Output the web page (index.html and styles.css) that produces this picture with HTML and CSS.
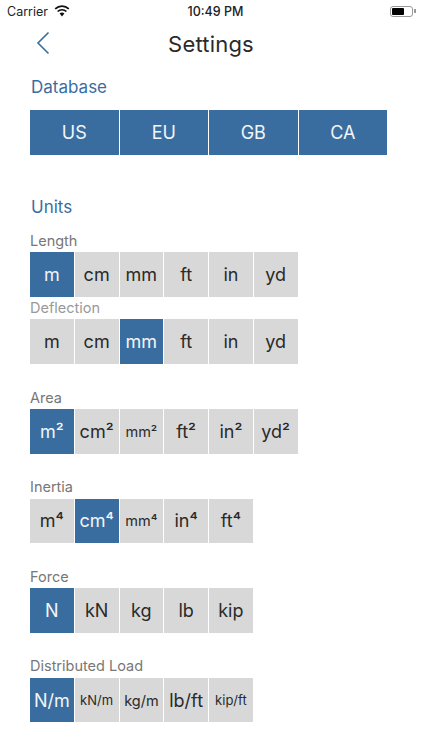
FILE: index.html
```html
<!DOCTYPE html>
<html lang="en">
<head>
  <meta charset="UTF-8" />
  <meta name="viewport" content="width=device-width, initial-scale=1.0" />
  <title>Settings</title>
  <link rel="stylesheet" href="styles.css">
</head>
<body>
  <div class="status">
    <div class="status-left">
      <span>Carrier</span>
      <svg class="wifi" width="16" height="12" viewBox="0 0 16 12">
        <path d="M8 11.5 L5.6 8.6 A3.6 3.6 0 0 1 10.4 8.6 Z" fill="#111"/>
        <path d="M3.6 6.5 A6.4 6.4 0 0 1 12.4 6.5" fill="none" stroke="#111" stroke-width="1.7"/>
        <path d="M1.2 3.9 A9.8 9.8 0 0 1 14.8 3.9" fill="none" stroke="#111" stroke-width="1.7"/>
      </svg>
    </div>
    <div class="status-time">10:49 PM</div>
    <div class="status-right">
      <div class="battery"><div class="battery-fill"></div></div>
      <div class="battery-tip"></div>
    </div>
  </div>

  <div class="nav">
    <svg class="back" width="14" height="24" viewBox="0 0 14 24">
      <path d="M12.5 1.5 L2 12 L12.5 22.5" fill="none" stroke="#3a6d9f" stroke-width="1.6"/>
    </svg>
    <h1>Settings</h1>
  </div>

  <h2 class="section-title">Database</h2>
  <div class="seg seg-db">
    <div class="on">US</div>
    <div class="on">EU</div>
    <div class="on">GB</div>
    <div class="on">CA</div>
  </div>

  <h2 class="section-title units-title">Units</h2>

  <div class="label">Length</div>
  <div class="seg">
    <div class="on">m</div><div>cm</div><div>mm</div><div>ft</div><div>in</div><div>yd</div>
  </div>

  <div class="label light">Deflection</div>
  <div class="seg">
    <div>m</div><div>cm</div><div class="on">mm</div><div>ft</div><div>in</div><div>yd</div>
  </div>

  <div class="label spaced">Area</div>
  <div class="seg">
    <div class="on">m²</div><div>cm²</div><div class="small">mm²</div><div>ft²</div><div>in²</div><div>yd²</div>
  </div>

  <div class="label spaced">Inertia</div>
  <div class="seg">
    <div>m⁴</div><div class="on">cm⁴</div><div class="small">mm⁴</div><div>in⁴</div><div>ft⁴</div>
  </div>

  <div class="label spaced">Force</div>
  <div class="seg">
    <div class="on">N</div><div>kN</div><div>kg</div><div>lb</div><div>kip</div>
  </div>

  <div class="label spaced">Distributed Load</div>
  <div class="seg">
    <div class="on">N/m</div><div class="tiny">kN/m</div><div class="small">kg/m</div><div>lb/ft</div><div class="tiny">kip/ft</div>
  </div>
</body>
</html>
```

FILE: styles.css
```css
body {
  margin: 0;
  background-color: #fff;
  font-family: Inter, "Liberation Sans", sans-serif;
  color: #2a2a2a;
  overflow: hidden;
}

.status {
  height: 22px;
  display: flex;
  justify-content: space-between;
  align-items: center;
  padding: 0 6px 0 7px;
  font-size: 12.5px;
  color: #222;
}

.status-left {
  display: flex;
  align-items: center;
  gap: 6px;
  width: 120px;
}

.status-time {
  font-weight: 500;
  margin-left: 8px;
}

.status-right {
  width: 120px;
  display: flex;
  justify-content: flex-end;
  align-items: center;
}

.battery {
  width: 23px;
  height: 11px;
  box-sizing: border-box;
  border: 1px solid #999;
  border-radius: 3px;
  padding: 1px;
}

.battery-fill {
  width: 12px;
  height: 100%;
  background-color: #000;
  border-radius: 1px;
}

.battery-tip {
  width: 1.5px;
  height: 4px;
  background-color: #999;
  margin-left: 1px;
}

.nav {
  height: 43px;
  display: flex;
  align-items: center;
  justify-content: center;
  position: relative;
  margin-left: 0;
}

.back {
  position: absolute;
  left: 36px;
  top: 9px;
}

h1 {
  margin: 0;
  font-size: 22px;
  font-weight: 400;
  letter-spacing: 0.2px;
  color: #2a2a2a;
}

.section-title {
  margin: 0 0 0 31px;
  height: 45px;
  line-height: 45px;
  font-size: 17px;
  font-weight: 400;
  color: #3a6d9f;
}

.units-title {
  margin-top: 30px;
}

.label {
  margin-left: 30px;
  height: 22.4px;
  line-height: 22px;
  font-size: 14.5px;
  color: #777;
}

.label.light {
  color: #999;
}

.label.spaced {
  margin-top: 22.4px;
}

.seg {
  margin-left: 30px;
  display: grid;
  grid-template-columns: repeat(6, 43.75px);
  grid-auto-rows: 44.8px;
  column-gap: 1px;
}

.seg-db {
  grid-template-columns: repeat(4, 88.5px);
}

.seg div {
  display: flex;
  align-items: center;
  justify-content: center;
  background-color: #d8d8d8;
  font-size: 18px;
}

.seg .on {
  background-color: #3a6d9f;
  color: #f2f5f8;
}

.seg .small {
  font-size: 14.5px;
}

.seg .tiny {
  font-size: 13px;
}
```
